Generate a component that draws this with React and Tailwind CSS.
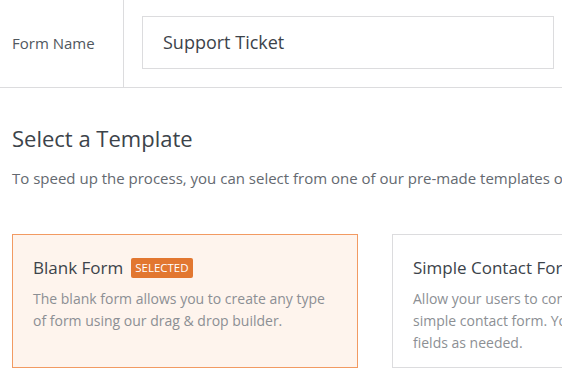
export default function App() {
  return (
    <div className="w-[562px] h-[391px] overflow-hidden bg-white text-[#3c434a]" style={{ fontFamily: '"Open Sans", "Noto Sans", sans-serif' }}>
      <div className="flex h-[88px] border-b border-[#dcdcde]">
        <div className="w-[124px] shrink-0 border-r border-[#dcdcde] flex items-center px-3 text-[15px] text-[#50575e]">
          Form Name
        </div>
        <div className="flex-1 pl-[18px] pr-2 pt-4">
          <div className="h-[53px] w-[412px] border border-[#dcdcde] flex items-center px-5 text-[18px] text-[#3c434a]">
            Support Ticket
          </div>
        </div>
      </div>

      <div className="px-3">
        <h1 className="mt-[36px] text-[22px] leading-[28px] text-[#3c434a]">Select a Template</h1>
        <p className="mt-[16px] text-[15px] leading-[20px] text-[#646970] whitespace-nowrap">
          To speed up the process, you can select from one of our pre-made templates or start with a blank form.
        </p>

        <div className="mt-[46px] flex gap-[34px]">
          <div className="w-[346px] h-[134px] shrink-0 border border-[#f29a62] bg-[#fef4ed] px-5 pt-[21px]">
            <div className="flex items-center gap-2">
              <span className="text-[17px] leading-[24px] text-[#3c434a]">Blank Form</span>
              <span className="bg-[#e27730] text-white text-[11.5px] leading-[20px] px-[4px] rounded-[2px] uppercase">Selected</span>
            </div>
            <p className="mt-[8px] text-[14px] leading-[22px] text-[#8c8f94]">
              The blank form allows you to create any type of form using our drag &amp; drop builder.
            </p>
          </div>
          <div className="w-[346px] h-[134px] shrink-0 border border-[#dcdcde] bg-white px-5 pt-[21px]">
            <div className="text-[17px] leading-[24px] text-[#3c434a] whitespace-nowrap">Simple Contact Form</div>
            <p className="mt-[8px] text-[14px] leading-[22px] text-[#8c8f94]">
              Allow your users to contact you with this simple contact form. You can add and remove fields as needed.
            </p>
          </div>
        </div>
      </div>
    </div>
  );
}
